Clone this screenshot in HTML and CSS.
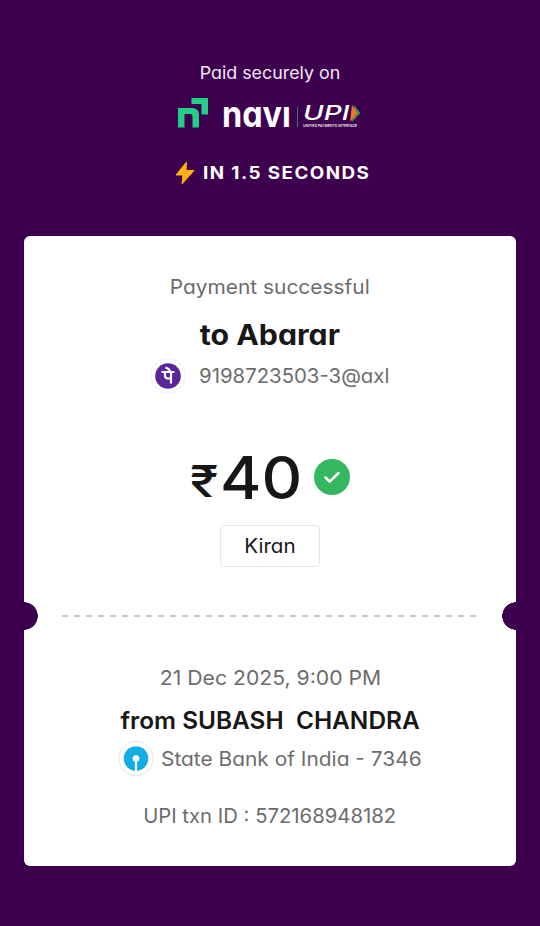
FILE: index.html
```html
<!DOCTYPE html>
<html lang="en">
<head>
<meta charset="utf-8">
<title>Payment receipt</title>
<link rel="stylesheet" href="styles.css">
</head>
<body>
<header class="top">
  <div class="secure"><span>Paid securely on</span></div>
  <div class="brands">
    <svg class="navi-mark" viewBox="0 0 30 30"><path fill="#27cc88" d="M0 10H14Q21 10 21 17V29.500H14.500V19Q14.500 16 12 16H6.500V29.500H0ZM13.500 0H30V16.500H23.500V6H13.500Z"/></svg>
    <span class="navi" aria-label="navi">navı</span>
    <span class="bar"></span>
    <div class="upi">
      <span class="upi-name">UPI</span>
      <span class="upi-sub">UNIFIED PAYMENTS INTERFACE</span>
      <svg class="upi-arrow" viewBox="0 0 11 17"><path fill="#3f8c50" d="M4 0L10.500 8L2 17Z"/><path fill="#ed752e" d="M2 0L7.500 8L0 17Z"/></svg>
    </div>
  </div>
  <div class="speed">
    <svg class="bolt" viewBox="0 0 20 24"><path fill="#ffb012" stroke="#ffb012" stroke-linejoin="round" d="M11.500 1L1 14H8L7 23L19 9.500H11Z"/></svg>
    <span>IN 1.5 SECONDS</span>
  </div>
</header>
<main class="ticket">
  <section class="payee">
    <div class="status"><span>Payment successful</span></div>
    <h1><span>to Abarar</span></h1>
    <div class="account">
      <svg class="badge" viewBox="0 0 36 36"><circle cx="18" cy="18" r="17" fill="#fff" stroke="#f1eef4"/><circle cx="18" cy="18" r="12.800" fill="#5b2499"/><g fill="none" stroke="#fff" stroke-width="2.200"><path d="M11.500 14H24.500M21 13.500V25.500M15 14.500V17.500Q15 20.500 18 20.500H21M20 13Q19 10.500 15.500 9.500"/></g></svg>
      <span class="vpa">9198723503-3@axl</span>
    </div>
    <div class="amount">
      <span class="rupee">₹</span><span class="value">40</span>
      <svg class="check" viewBox="0 0 36 36"><circle cx="18" cy="18" r="18" fill="#34b75f"/><path d="M11.500 18.500L15.700 22.700L24.500 14" fill="none" stroke="#fff" stroke-width="2.500" stroke-linecap="round" stroke-linejoin="round"/></svg>
    </div>
    <div class="note"><span>Kiran</span></div>
  </section>
  <div class="tear">
    <svg viewBox="0 0 415 2"><path d="M0 1H415" stroke="#b4b4b4" stroke-width="1.500" stroke-dasharray="6 6"/></svg>
  </div>
  <section class="payer">
    <div class="date"><span>21 Dec 2025, 9:00 PM</span></div>
    <h2><span>from SUBASH&nbsp; CHANDRA</span></h2>
    <div class="bank">
      <svg class="badge" viewBox="0 0 36 36"><circle cx="18" cy="17.500" r="17" fill="#fff" stroke="#e8e5e7"/><circle cx="18" cy="17.500" r="12.300" fill="#14ace4"/><circle cx="18" cy="17.500" r="3.300" fill="#fff"/><path d="M18 18V31" stroke="#fff" stroke-width="2.200"/></svg>
      <span class="bankname">State Bank of India - 7346</span>
    </div>
    <div class="txn"><span>UPI txn ID : 572168948182</span></div>
  </section>
</main>
</body>
</html>
```
FILE: styles.css
```css
* { box-sizing: border-box; }
body {
  margin: 0;
  width: 540px;
  height: 926px;
  padding: 0 24px;
  background: #3d004f;
  font-family: Inter, "Noto Sans", sans-serif;
  font-feature-settings: "cv11" 1;
  color: #171717;
  white-space: nowrap;
  overflow: hidden;
}
svg { display: block; flex: none; }
h1, h2 { margin: 0; }
.top { height: 236px; padding-top: 61px; color: #fff; }
.secure, .status, .date, .txn, h1, h2 { display: flex; justify-content: center; }
.secure { height: 24px; line-height: 24px; font-size: 17px; color: #f3e8f6; }
.secure span { transform: scaleX(1.05); }
.brands { display: flex; height: 44px; margin-top: 8px; padding-left: 154px; }
.navi-mark { width: 30px; height: 30px; margin-top: 5px; }
.navi { margin: -2px 0 0 14px; width: 70px; font-size: 36px; font-weight: 700; line-height: 46px; transform: scaleX(.9); transform-origin: left; }
.bar { width: 1px; height: 20px; margin: 14px 0 0 5px; background: #28816f; }
.upi { position: relative; margin-left: 5px; padding-top: 11px; width: 58px; }
.upi-name { display: block; font-size: 20px; font-weight: 500; font-style: italic; line-height: 19px; transform: scaleX(1.4); transform-origin: left; }
.upi-sub { display: block; margin-top: 1px; font-size: 4px; font-weight: 500; line-height: 4px; transform: scaleX(.88); transform-origin: left; }
.upi-arrow { position: absolute; left: 47px; top: 12px; width: 11px; height: 17px; }
.speed { display: flex; align-items: center; height: 24px; margin-top: 24px; padding-left: 151px; font-size: 17px; font-weight: 700; letter-spacing: 1.3px; }
.speed span { transform: scaleX(1.105); transform-origin: left; }
.bolt { width: 20px; height: 24px; margin-right: 8px; }
.ticket { height: 630px; background: #fff; border-radius: 6px; }
.payee { height: 366px; padding-top: 37px; }
.status, .date, .txn, .vpa, .bankname { font-size: 20px; font-weight: 400; color: #6c6c6c; }
.status { height: 28px; line-height: 28px; }
.status span { transform: scaleX(1.045); }
h1 { height: 36px; margin-top: 16px; line-height: 36px; font-size: 28px; font-weight: 700; }
h1 span { transform: scaleX(1.08); }
.account { display: flex; align-items: center; height: 36px; margin-top: 5px; padding-left: 126px; }
.badge { width: 36px; height: 36px; }
.vpa { margin-left: 13px; transform: scaleX(1.018); transform-origin: left; }
.amount { display: flex; height: 70px; margin-top: 48px; padding-left: 166px; }
.rupee { width: 33px; font-size: 44px; font-weight: 500; line-height: 78px; transform: scaleX(1.17); transform-origin: left; }
.value { width: 91px; margin-left: -3px; font-size: 59px; font-weight: 500; line-height: 72px; transform: scaleX(1.07); transform-origin: left; }
.check { width: 36px; height: 36px; margin: 17px 0 0 3px; }
.note { display: flex; align-items: center; justify-content: center; width: 100px; height: 42px; margin: 13px auto 0; border: 1.500px solid #e5e5e5; border-radius: 5px; font-size: 20px; font-weight: 400; }
.note span { transform: scaleX(1.03); }
.tear { display: flex; align-items: center; justify-content: center; height: 28px; background: radial-gradient(circle at 0 50%, #3d004f 13.500px, transparent 14px), radial-gradient(circle at 100% 50%, #3d004f 13.500px, transparent 14px); }
.tear svg { width: 415px; height: 2px; margin-left: -2px; }
.payer { padding-top: 34px; }
.date { height: 28px; line-height: 28px; }
.date span { transform: scaleX(1.06); }
h2 { height: 32px; margin-top: 13px; line-height: 32px; font-size: 24px; font-weight: 600; }
h2 span { transform: scaleX(1.017); }
.bank { display: flex; align-items: center; height: 36px; margin-top: 4px; padding-left: 94px; }
.bankname { margin-left: 7px; transform: scaleX(1.045); transform-origin: left; }
.txn { height: 28px; margin-top: 25px; line-height: 28px; }
.txn span { transform: scaleX(1.015); }
```
